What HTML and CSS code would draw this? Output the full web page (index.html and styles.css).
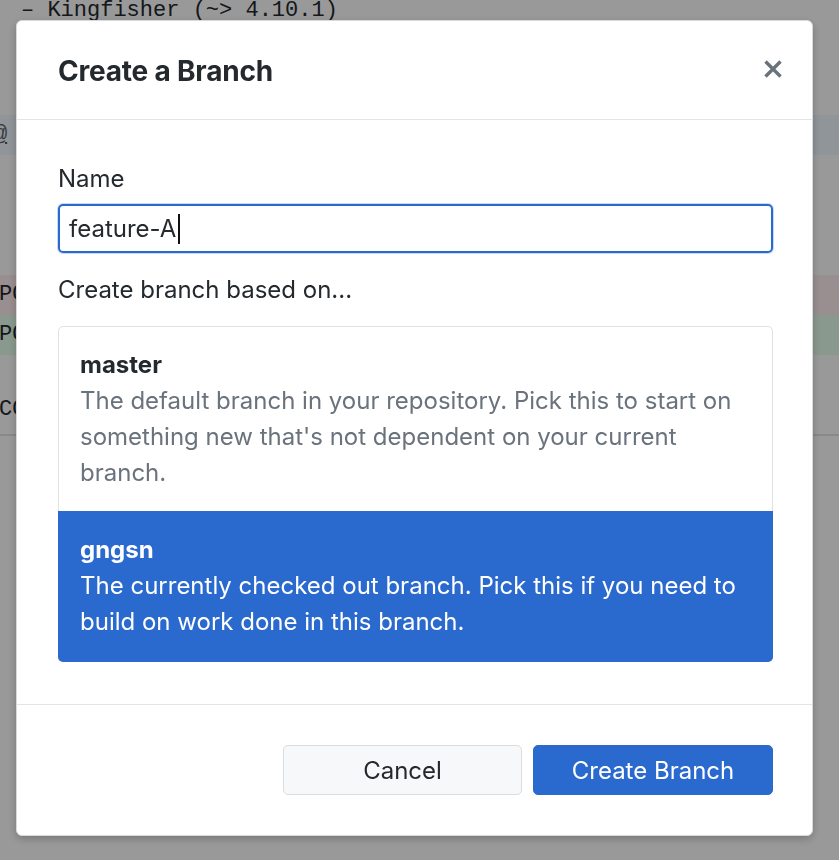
FILE: index.html
```html
<!DOCTYPE html>
<html lang="en">
<head>
<meta charset="utf-8">
<title>Create a Branch</title>
<link rel="stylesheet" href="styles.css">
</head>
<body>
<div class="backdrop-content">
  <div class="code-line first">– Kingfisher (~&gt; 4.10.1)</div>
  <div class="code-spacer s1"></div>
  <div class="code-line hunk"><span class="hunk-text">@</span></div>
  <div class="code-spacer s2"></div>
  <div class="code-line del">PODFILE CHECKSUM: 4f1d</div>
  <div class="code-line add">PODFILE CHECKSUM: 9a3c</div>
  <div class="code-spacer s3"></div>
  <div class="code-line plain">COCOAPODS: 1.5.3</div>
  <div class="code-rule"></div>
</div>

<div class="overlay">
  <div class="modal">
    <header class="modal-header">
      <h1 class="modal-title">Create a Branch</h1>
      <button class="close-btn" aria-label="Close">
        <svg width="20" height="20" viewBox="0 0 20 20" aria-hidden="true">
          <path d="M2.5 2.5 L17.5 17.5 M17.5 2.5 L2.5 17.5" stroke="#6a737d" stroke-width="3.4" stroke-linecap="butt" fill="none"/>
        </svg>
      </button>
    </header>

    <div class="modal-body">
      <div class="field-label">Name</div>
      <div class="text-input">feature-A<span class="caret"></span></div>

      <div class="field-label based">Create branch based on...</div>
      <ul class="branch-list">
        <li class="branch">
          <div class="branch-name">master</div>
          <div class="branch-desc">The default branch in your repository. Pick this to start on something new that's not dependent on your current branch.</div>
        </li>
        <li class="branch selected">
          <div class="branch-name">gngsn</div>
          <div class="branch-desc">The currently checked out branch. Pick this if you need to build on work done in this branch.</div>
        </li>
      </ul>
    </div>

    <footer class="modal-footer">
      <button class="btn">Cancel</button>
      <button class="btn primary">Create Branch</button>
    </footer>
  </div>
</div>
</body>
</html>
```

FILE: styles.css
```css
* { box-sizing: border-box; }

html, body {
  margin: 0;
  padding: 0;
  background: #ffffff;
}

body {
  width: 839px;
  height: 860px;
  overflow: hidden;
  font-family: "Inter", "Noto Sans", "Liberation Sans", sans-serif;
}

/* ---------- background page (dimmed) ---------- */
.backdrop-content {
  font-family: "Liberation Mono", "DejaVu Sans Mono", monospace;
  font-size: 22px;
  color: #24292e;
}

.code-line {
  height: 40px;
  line-height: 40px;
  white-space: nowrap;
}

.code-line.first {
  height: 26px;
  line-height: 26px;
  margin-top: -2px;
  padding-left: 21px;
}

.code-spacer.s1 { height: 91px; }
.code-spacer.s2 { height: 120px; }
.code-spacer.s3 { height: 35px; }

.code-line.hunk {
  background: #f1f8ff;
  color: #586069;
}

.hunk-text {
  display: inline-block;
  margin-left: -6px;
  text-decoration: underline;
}

.code-line.del {
  background: #ffeef0;
  text-indent: -1px;
}

.code-line.add {
  background: #e6ffed;
  text-indent: -1px;
}

.code-line.plain {
  text-indent: -1px;
}

.code-rule {
  margin-top: 4px;
  height: 2px;
  background: #e1e4e8;
}

/* ---------- overlay + modal ---------- */
.overlay {
  position: fixed;
  inset: 0;
  background: rgba(0, 0, 0, 0.4);
}

.modal {
  position: absolute;
  left: 16px;
  top: 20px;
  width: 797px;
  display: flex;
  flex-direction: column;
  background: #ffffff;
  border: 1px solid #d6d9dd;
  border-radius: 6px;
  box-shadow: 0 3px 8px rgba(0, 0, 0, 0.22);
  color: #24292e;
}

.modal-header {
  height: 99px;
  display: flex;
  align-items: center;
  justify-content: space-between;
  padding: 0 29px 0 41px;
  border-bottom: 1px solid #e1e4e8;
}

.modal-title {
  margin: 0;
  margin-top: 2px;
  font-size: 28px;
  font-weight: 700;
  letter-spacing: -0.2px;
  color: #24292e;
}

.close-btn {
  border: 0;
  background: none;
  padding: 0;
  width: 20px;
  height: 20px;
  display: flex;
  margin-top: -2px;
}

.modal-body {
  padding: 41px 39px 42px 41px;
  font-size: 24px;
  line-height: 36px;
}

.field-label {
  color: #24292e;
}

.field-label.based {
  margin-top: 19px;
}

.text-input {
  margin-top: 7px;
  height: 49px;
  border: 2px solid #2a69ce;
  border-radius: 5px;
  box-shadow: 0 0 0 1px rgba(42, 105, 206, 0.25);
  padding: 0 9px;
  display: flex;
  align-items: center;
  color: #24292e;
}

.caret {
  display: inline-block;
  width: 1.5px;
  height: 30px;
  margin-left: 2px;
  background: #111;
}

.branch-list {
  list-style: none;
  margin: 18px 0 0 0;
  padding: 0;
  border: 1px solid #dfe2e6;
  border-radius: 5px;
}

.branch {
  padding: 20px 21px 20px 21px;
}

.branch-name {
  font-weight: 700;
  color: #24292e;
}

.branch-desc {
  color: #6a737d;
}

.branch.selected {
  background: #2a69ce;
  margin: 0 -1px -1px -1px;
  padding: 21px 22px 22px 22px;
  border-radius: 0 0 5px 5px;
}

.branch.selected .branch-name,
.branch.selected .branch-desc {
  color: #ffffff;
}

.modal-footer {
  border-top: 1px solid #e1e4e8;
  padding: 40px 39px 40px 41px;
  display: flex;
  justify-content: flex-end;
  gap: 11px;
}

.btn {
  width: 239px;
  height: 50px;
  border-radius: 5px;
  border: 1px solid #d9dce0;
  background: #f7f8fa;
  color: #24292e;
  font-family: inherit;
  font-size: 24px;
  padding: 0;
}

.btn.primary {
  width: 240px;
  background: #2a69ce;
  border-color: #2a69ce;
  color: #ffffff;
}
```
